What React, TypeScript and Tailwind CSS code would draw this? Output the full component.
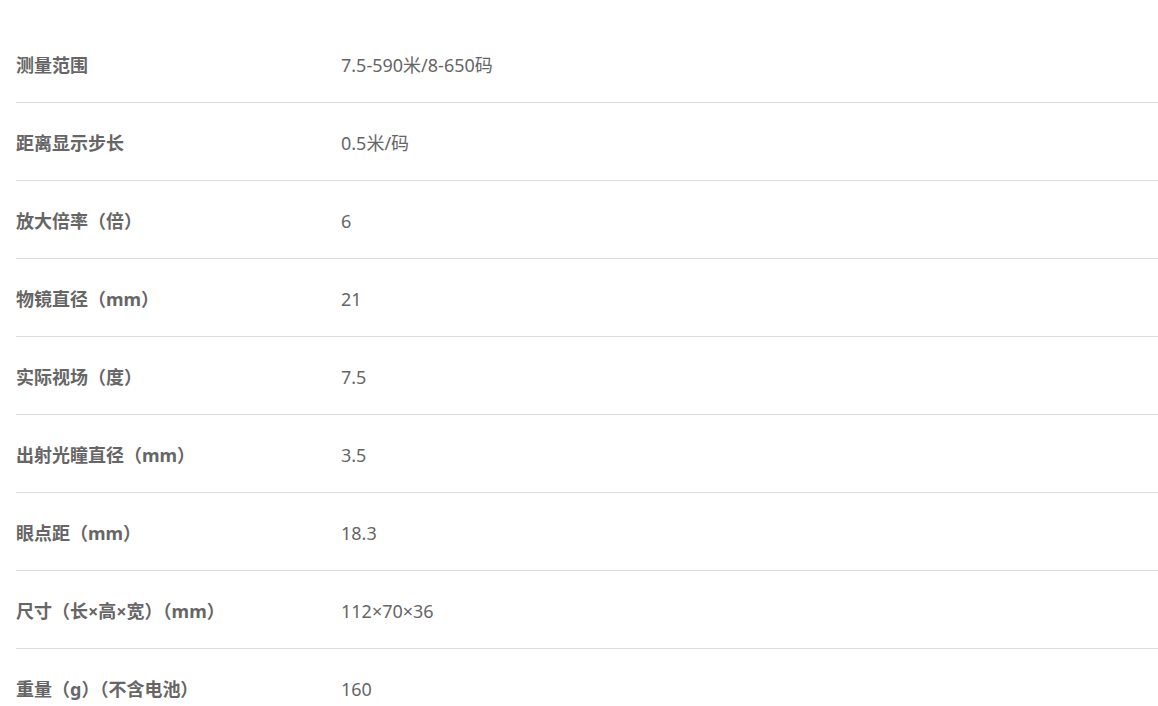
import React from 'react';

const specs: [string, string][] = [
    ['测量范围', '7.5-590米/8-650码'],
    ['距离显示步长', '0.5米/码'],
    ['放大倍率（倍）', '6'],
    ['物镜直径（mm）', '21'],
    ['实际视场（度）', '7.5'],
    ['出射光瞳直径（mm）', '3.5'],
    ['眼点距（mm）', '18.3'],
    ['尺寸（长×高×宽）（mm）', '112×70×36'],
    ['重量（g）（不含电池）', '160'],
];

const App = () => {
    return (
        <div className="w-[1158px] h-[706px] overflow-hidden bg-white pl-4 pt-[25px] font-['Noto_Sans','Noto_Sans_CJK_SC',sans-serif] text-[#666]">
            {specs.map(([label, value], i) => (
                <div
                    key={label}
                    className={`flex items-center pt-7 pb-[25px] ${i < specs.length - 1 ? 'border-b border-[#ddd]' : ''}`}
                >
                    <div className="w-[325px] shrink-0 text-lg leading-6 font-bold">{label}</div>
                    <div className="text-lg leading-6">{value}</div>
                </div>
            ))}
        </div>
    );
};

export default App;
